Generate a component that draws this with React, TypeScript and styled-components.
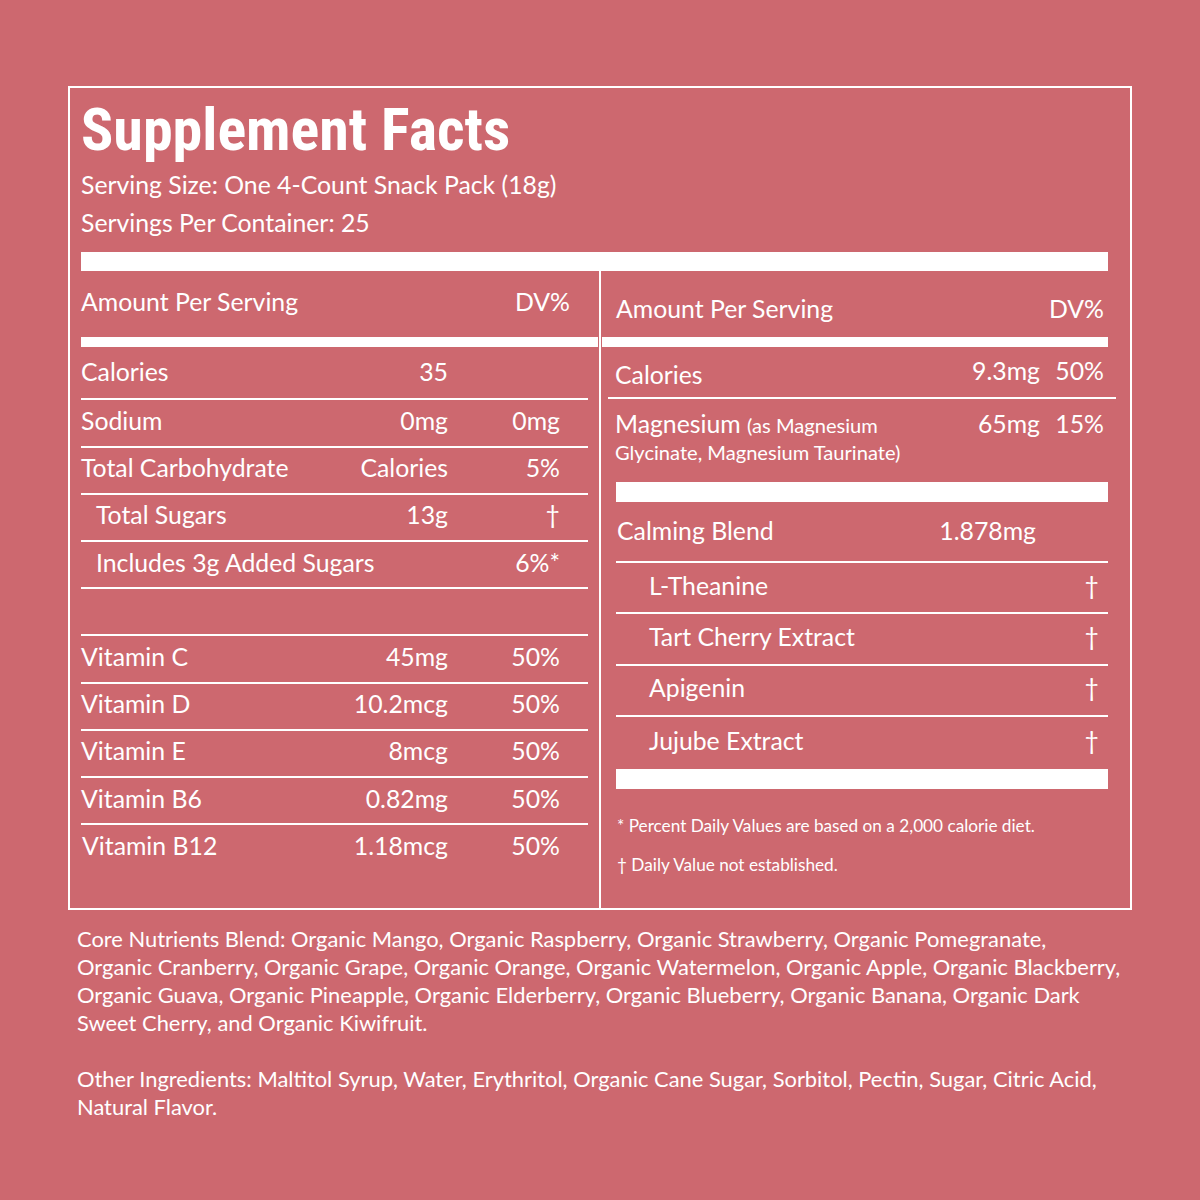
import React from 'react';
import styled, { createGlobalStyle } from 'styled-components';

const BG = '#CD686F';
const INK = '#FFFFFF';

const GlobalStyle = createGlobalStyle`
  html, body { margin: 0; padding: 0; background: ${BG}; }
  body { font-family: Lato, "Open Sans", sans-serif; color: ${INK}; }
`;

const Page = styled.main`
  width: 1200px;
  height: 1200px;
  box-sizing: border-box;
  padding: 86px 0 0 68px;
  background: ${BG};
  color: ${INK};
  font-family: Lato, "Open Sans", sans-serif;
`;

const Panel = styled.section`
  width: 1064px;
  height: 824px;
  box-sizing: border-box;
  border: 2px solid ${INK};
  display: flex;
  flex-direction: column;
`;

const Header = styled.header`
  padding: 12px 22px 0 11px;
`;

const Title = styled.h1`
  margin: 0;
  font-family: "Roboto Condensed", Roboto, sans-serif;
  font-stretch: condensed;
  font-weight: 700;
  font-size: 60px;
  line-height: 60px;
  letter-spacing: 0;
`;

const ServingLine = styled.div<{ $first?: boolean }>`
  font-size: 24.8px;
  line-height: 38px;
  margin-top: ${(p) => (p.$first ? '6.4px' : '0')};
  white-space: nowrap;
`;

const Bar = styled.div<{ $h: number; $ml?: number; $mr?: number }>`
  height: ${(p) => p.$h}px;
  background: ${INK};
  margin-left: ${(p) => p.$ml ?? 0}px;
  margin-right: ${(p) => p.$mr ?? 0}px;
  flex: none;
`;

const TopBar = styled(Bar)`
  margin-top: 9.6px;
`;

const Columns = styled.div`
  flex: 1;
  display: grid;
  grid-template-columns: 529px 531px;
  min-height: 0;
`;

const LeftCol = styled.div`
  padding-left: 11px;
  display: flex;
  flex-direction: column;
`;

const RightCol = styled.div`
  box-sizing: border-box;
  border-left: 2px solid ${INK};
  display: flex;
  flex-direction: column;
`;

const ColHead = styled.div<{ $pt: number; $pb: number; $pl: number; $pr: number }>`
  height: 66px;
  box-sizing: border-box;
  display: flex;
  align-items: center;
  justify-content: space-between;
  padding: ${(p) => `${p.$pt}px ${p.$pr}px ${p.$pb}px ${p.$pl}px`};
  font-size: 24.8px;
  line-height: 30px;
  white-space: nowrap;
`;

const Row = styled.div<{
  $h: number;
  $line?: boolean;
  $ml?: number;
  $mr?: number;
  $pr: number;
  $valW: number;
  $dvW: number;
  $pb?: number;
}>`
  height: ${(p) => p.$h}px;
  box-sizing: content-box;
  display: grid;
  grid-template-columns: minmax(0, 1fr) ${(p) => p.$valW}px ${(p) => p.$dvW}px;
  align-items: center;
  margin-left: ${(p) => p.$ml ?? 0}px;
  margin-right: ${(p) => p.$mr ?? 0}px;
  padding-right: ${(p) => p.$pr}px;
  border-bottom: ${(p) => (p.$line ? `2px solid ${INK}` : '0')};
  font-size: 24.8px;
  line-height: 30px;
  white-space: nowrap;
  flex: none;
  & > * {
    padding-bottom: ${(p) => p.$pb ?? 0}px;
  }
`;

const Label = styled.span<{ $indent?: number; $drop?: number }>`
  padding-left: ${(p) => p.$indent ?? 0}px;
  margin-top: ${(p) => (p.$drop ?? 0) * 2}px;
  overflow: visible;
`;

const Num = styled.span`
  text-align: right;
`;

const MultiRow = styled.div`
  display: grid;
  grid-template-columns: minmax(0, 1fr) 150px 64px;
  align-items: start;
  margin: 0 14px 0 7px;
  padding: 10px 12px 0 7px;
  height: 83px;
  box-sizing: border-box;
  flex: none;
`;

const MainText = styled.div`
  font-size: 24.8px;
  line-height: 30px;
  white-space: nowrap;
`;

const Small = styled.span`
  font-size: 20.1px;
  line-height: 1;
`;

const SmallLine = styled.div`
  font-size: 20.1px;
  line-height: 27px;
  white-space: nowrap;
`;

const Notes = styled.div`
  margin: 16.8px 0 0 16px;
  font-size: 17.2px;
  line-height: 39px;
  white-space: nowrap;
`;

const Ingredients = styled.p<{ $mt: number }>`
  margin: ${(p) => p.$mt}px 0 0 9px;
  font-size: 21.9px;
  line-height: 28px;
  white-space: nowrap;
`;

type Item = { label: string; value?: string; dv?: string; indent?: number; line?: boolean };

const topRows: Item[] = [
  { label: 'Sodium', value: '0mg', dv: '0mg', line: true },
  { label: 'Total Carbohydrate', value: 'Calories', dv: '5%', line: true },
  { label: 'Total Sugars', value: '13g', dv: '†', indent: 15, line: true },
  { label: 'Includes 3g Added Sugars', dv: '6%*', indent: 15, line: true },
  { label: '', line: true },
];

const vitamins: Item[] = [
  { label: 'Vitamin C', value: '45mg', dv: '50%', line: true },
  { label: 'Vitamin D', value: '10.2mcg', dv: '50%', line: true },
  { label: 'Vitamin E', value: '8mcg', dv: '50%', line: true },
  { label: 'Vitamin B6', value: '0.82mg', dv: '50%', line: true },
  { label: 'Vitamin B12', value: '1.18mcg', dv: '50%', indent: 1, line: false },
];

const blend = ['L-Theanine', 'Tart Cherry Extract', 'Apigenin', 'Jujube Extract'];

export default function App() {
  return (
    <>
      <GlobalStyle />
      <Page>
        <Panel>
          <Header>
            <Title>Supplement Facts</Title>
            <ServingLine $first>Serving Size: One 4-Count Snack Pack (18g)</ServingLine>
            <ServingLine>Servings Per Container: 25</ServingLine>
          </Header>
          <TopBar $h={19} $ml={11} $mr={22} />
          <Columns>
            <LeftCol>
              <ColHead $pt={0} $pb={4} $pl={0} $pr={29}>
                <span>Amount Per Serving</span>
                <span>DV%</span>
              </ColHead>
              <Bar $h={10} $mr={1} />
              <Row $h={51.5} $line $mr={11} $pr={28} $valW={150} $dvW={112} $pb={2}>
                <Label>Calories</Label>
                <Num>35</Num>
                <Num />
              </Row>
              {[...topRows, ...vitamins].map((r, i) => (
                <Row key={i} $h={45.2} $line={r.line} $mr={11} $pr={28} $valW={150} $dvW={112} $pb={4}>
                  <Label $indent={r.indent}>{r.label}</Label>
                  <Num>{r.value ?? ''}</Num>
                  <Num>{r.dv ?? ''}</Num>
                </Row>
              ))}
            </LeftCol>
            <RightCol>
              <ColHead $pt={10} $pb={0} $pl={15} $pr={26}>
                <span>Amount Per Serving</span>
                <span>DV%</span>
              </ColHead>
              <Bar $h={10} $ml={1} $mr={22} />
              <Row $h={50} $line $ml={7} $mr={14} $pr={12} $valW={150} $dvW={64} $pb={2}>
                <Label $indent={7} $drop={4}>Calories</Label>
                <Num>9.3mg</Num>
                <Num>50%</Num>
              </Row>
              <MultiRow>
                <div>
                  <MainText>
                    Magnesium <Small>(as Magnesium</Small>
                  </MainText>
                  <SmallLine>Glycinate, Magnesium Taurinate)</SmallLine>
                </div>
                <MainText as={Num}>65mg</MainText>
                <MainText as={Num}>15%</MainText>
              </MultiRow>
              <Bar $h={20} $ml={15} $mr={22} />
              <Row $h={59} $line $ml={15} $mr={22} $pr={9} $valW={150} $dvW={63} $pb={1}>
                <Label $indent={1}>Calming Blend</Label>
                <Num>1.878mg</Num>
                <Num />
              </Row>
              {blend.map((b, i) => (
                <Row
                  key={b}
                  $h={i === blend.length - 1 ? 52 : 49.3}
                  $line={i !== blend.length - 1}
                  $ml={15}
                  $mr={22}
                  $pr={9}
                  $valW={150}
                  $dvW={63}
                  $pb={4}
                >
                  <Label $indent={33}>{b}</Label>
                  <Num />
                  <Num>†</Num>
                </Row>
              ))}
              <Bar $h={20} $ml={15} $mr={22} />
              <Notes>
                <div>* Percent Daily Values are based on a 2,000 calorie diet.</div>
                <div>† Daily Value not established.</div>
              </Notes>
            </RightCol>
          </Columns>
        </Panel>
        <Ingredients $mt={14.5}>
          Core Nutrients Blend: Organic Mango, Organic Raspberry, Organic Strawberry, Organic Pomegranate,
          <br />
          Organic Cranberry, Organic Grape, Organic Orange, Organic Watermelon, Organic Apple, Organic Blackberry,
          <br />
          Organic Guava, Organic Pineapple, Organic Elderberry, Organic Blueberry, Organic Banana, Organic Dark
          <br />
          Sweet Cherry, and Organic Kiwifruit.
        </Ingredients>
        <Ingredients $mt={28}>
          Other Ingredients: Maltitol Syrup, Water, Erythritol, Organic Cane Sugar, Sorbitol, Pectin, Sugar, Citric Acid,
          <br />
          Natural Flavor.
        </Ingredients>
      </Page>
    </>
  );
}
